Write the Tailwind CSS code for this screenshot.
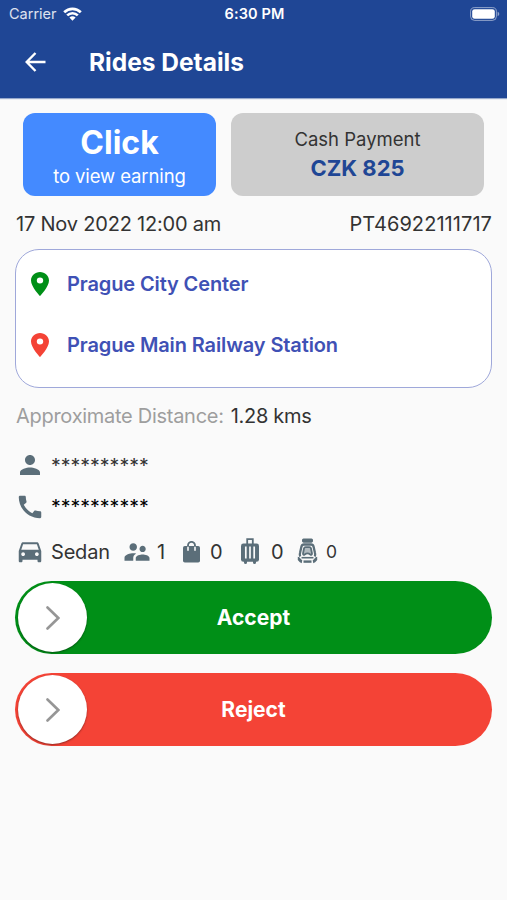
<!DOCTYPE html>
<html lang="en">
<head>
    <meta charset="UTF-8">
    <meta name="viewport" content="width=device-width, initial-scale=1.0">
    <title>Rides Details</title>
    <script src="https://cdn.jsdelivr.net/npm/@tailwindcss/browser@4"></script>
</head>
<body class="bg-[#fafafa] font-['Inter',sans-serif] text-[#333333]">
    <div class="w-[507px] h-[900px] overflow-hidden">
        <header class="h-[98px] bg-[#1f4695] text-white shadow-[0_1px_1px_rgba(31,70,149,0.45)]">
            <div class="grid grid-cols-3 items-center h-[27px] pl-[9px] pr-[7px]">
                <div class="flex items-center gap-[6px] text-[14.5px] text-white/85">
                    <span class="pt-px">Carrier</span>
                    <svg class="w-[19px] h-[14px]" viewBox="0 0 19 14" fill="none" stroke="white" stroke-width="2.7">
                        <path d="M1.2 5.2a11.8 11.8 0 0 1 16.6 0" />
                        <path d="M4.2 8.4a7.6 7.6 0 0 1 10.6 0" />
                        <path d="M9.5 13.8 6.4 10.6a4.5 4.5 0 0 1 6.2 0z" fill="white" stroke="none" />
                    </svg>
                </div>
                <div class="text-center text-[14.5px] font-semibold tracking-[0.1px]">6:30 PM</div>
                <svg class="w-[30px] h-[14px] justify-self-end" viewBox="0 0 30 14">
                    <rect x=".6" y=".6" width="25.8" height="12.8" rx="4" fill="none" stroke="white" stroke-opacity=".5" />
                    <rect x="2.2" y="2.2" width="22.6" height="9.6" rx="2.4" fill="white" />
                    <path d="M27.6 4.8c2.2.7 2.2 3.7 0 4.4z" fill="white" fill-opacity=".5" />
                </svg>
            </div>
            <div class="flex items-center h-[70px] pl-[25px]">
                <svg class="w-[21px] h-[20px]" viewBox="0 0 21 20" fill="none" stroke="white" stroke-width="2.4">
                    <path d="M20.5 10H2M10.5 1 1.7 10l8.8 9" />
                </svg>
                <h1 class="ml-[43px] pt-px text-[24.5px] font-bold">Rides Details</h1>
            </div>
        </header>
        <main class="px-[15px] pt-[15px]">
            <div class="flex gap-[15px] px-[8px] h-[83px]">
                <button class="w-[193px] rounded-[12px] bg-[#448aff] text-white flex flex-col items-center">
                    <span class="mt-[10px] text-[32px] leading-[40px] font-bold">Click</span>
                    <span class="mt-px text-[18.5px] leading-[24px] tracking-[-0.1px]">to view earning</span>
                </button>
                <div class="w-[253px] rounded-[12px] bg-[#cdcdcd] flex flex-col items-center">
                    <span class="mt-[14px] text-[18.5px] leading-[24px]">Cash Payment</span>
                    <span class="mt-px text-[22px] leading-[32px] font-bold text-[#1f4695]">CZK 825</span>
                </div>
            </div>
            <div class="flex justify-between items-center h-[53px] pl-px pt-[2px] text-[20px]">
                <span class="tracking-[-0.2px]">17 Nov 2022 12:00 am</span>
                <span class="tracking-[0.07px]">PT46922111717</span>
            </div>
            <div class="h-[139px] rounded-[24px] border border-[#9fa8da] bg-white pl-[15px] pt-[14px] text-[20px] font-semibold tracking-[-0.12px] text-[#3f51b5]">
                <div class="flex items-center h-[40px]">
                    <svg class="w-[18px] h-[24px]" viewBox="5 2 14 20" preserveAspectRatio="none" fill="#008f17"><path d="M12 2C8.13 2 5 5.13 5 9c0 5.25 7 13 7 13s7-7.75 7-13c0-3.87-3.13-7-7-7zm0 9.5a2.5 2.5 0 0 1 0-5 2.5 2.5 0 0 1 0 5z" /></svg>
                    <span class="ml-[18px]">Prague City Center</span>
                </div>
                <div class="flex items-center h-[40px] mt-[21px]">
                    <svg class="w-[18px] h-[24px]" viewBox="5 2 14 20" preserveAspectRatio="none" fill="#f44336"><path d="M12 2C8.13 2 5 5.13 5 9c0 5.25 7 13 7 13s7-7.75 7-13c0-3.87-3.13-7-7-7zm0 9.5a2.5 2.5 0 0 1 0-5 2.5 2.5 0 0 1 0 5z" /></svg>
                    <span class="ml-[18px]">Prague Main Railway Station</span>
                </div>
            </div>
            <div class="flex items-center h-[54px] pl-px pt-px text-[20px] tracking-[-0.28px]">
                <span class="text-[#9e9e9e]">Approximate Distance:</span>
                <span class="ml-[7px]">1.28 kms</span>
            </div>
            <div class="flex items-center h-[46px]">
                <svg class="w-[30px] h-[30px]" viewBox="0 0 24 24" fill="#5b6e79"><path d="M12 12c2.21 0 4-1.79 4-4s-1.79-4-4-4-4 1.79-4 4 1.79 4 4 4zm0 2c-2.67 0-8 1.34-8 4v2h16v-2c0-2.66-5.33-4-8-4z" /></svg>
                <span class="ml-[6px] pt-[4px] text-[19.5px]">**********</span>
            </div>
            <div class="flex items-center h-[37px]">
                <svg class="w-[30px] h-[30px]" viewBox="0 0 24 24" fill="#5b6e79"><path d="M20.01 15.38c-1.23 0-2.42-.2-3.53-.56-.35-.12-.74-.03-1.01.24l-1.57 1.97c-2.83-1.35-5.48-3.9-6.89-6.83l1.95-1.66c.27-.28.35-.67.24-1.02-.37-1.11-.56-2.3-.56-3.53 0-.54-.45-.99-.99-.99H4.19C3.65 3 3 3.24 3 3.99 3 13.28 10.73 21 20.01 21c.71 0 .99-.63.99-1.18v-3.45c0-.54-.45-.99-.99-.99z" /></svg>
                <span class="ml-[6px] pt-[3px] text-[19.5px] text-black">**********</span>
            </div>
            <div class="flex items-center h-[54px] text-[20px]">
                <svg class="w-[30px] h-[30px] mb-[2px]" viewBox="0 0 24 24" fill="#5b6e79"><path d="M18.92 6.01C18.72 5.42 18.16 5 17.5 5h-11c-.66 0-1.21.42-1.42 1.01L3 12v8c0 .55.45 1 1 1h1c.55 0 1-.45 1-1v-1h12v1c0 .55.45 1 1 1h1c.55 0 1-.45 1-1v-8l-2.08-5.99zM6.5 16c-.83 0-1.5-.67-1.5-1.5S5.67 13 6.5 13s1.5.67 1.5 1.5S7.33 16 6.5 16zm11 0c-.83 0-1.5-.67-1.5-1.5s.67-1.5 1.5-1.5 1.5.67 1.5 1.5-.67 1.5-1.5 1.5zM5 11l1.5-4.5h11L19 11H5z" /></svg>
                <span class="ml-[6px] w-[71px] tracking-[-0.2px]">Sedan</span>
                <svg class="w-[30px] h-[30px]" viewBox="0 0 24 24" fill="#5b6e79"><path d="M16.5 12c1.38 0 2.49-1.12 2.49-2.5S17.88 7 16.5 7C15.12 7 14 8.12 14 9.5s1.12 2.5 2.5 2.5zM9 11c1.66 0 2.99-1.34 2.99-3S10.66 5 9 5C7.34 5 6 6.34 6 8s1.34 3 3 3zm7.5 3c-1.83 0-5.5.92-5.5 2.75V19h11v-2.25c0-1.83-3.67-2.75-5.5-2.75zM9 13c-2.33 0-7 1.17-7 3.5V19h7v-2.25c0-.85.33-2.34 2.37-3.47C10.5 13.1 9.66 13 9 13z" /></svg>
                <span class="ml-[5px] w-[26px]">1</span>
                <!-- hand bag -->
                <svg class="w-[17px] h-[22px]" viewBox="0 0 17 22">
                    <path d="M5 8V4.4a3.5 3.5 0 0 1 7 0V8" fill="none" stroke="#5b6e79" stroke-width="1.9" />
                    <rect y="5" width="17" height="16.5" rx="1.8" fill="#5b6e79" />
                    <path d="M5 6.2v3M12 6.2v3" stroke="#fafafa" stroke-width="1.6" stroke-linecap="round" />
                </svg>
                <span class="ml-[10px] w-[31px]">0</span>
                <!-- suitcase -->
                <svg class="w-[18px] h-[26px] mb-[2px]" viewBox="0 0 18 26">
                    <path d="M6.2 6.5V1.2h5.6v5.3" fill="none" stroke="#5b6e79" stroke-width="1.8" />
                    <rect y="5.6" width="18" height="18.2" rx="2.4" fill="#5b6e79" />
                    <path d="M3 23h3v1.5a1.5 1.5 0 0 1-3 0zM12 23h3v1.5a1.5 1.5 0 0 1-3 0z" fill="#5b6e79" />
                    <path d="M4.8 8.5v12M9 8.5v12M13.2 8.5v12" stroke="#fafafa" stroke-width="1.7" />
                </svg>
                <span class="ml-[12px] w-[26px]">0</span>
                <!-- child seat -->
                <svg class="w-[21px] h-[26px] mb-[2px]" viewBox="0 0 21 26" fill="none" stroke="#5b6e79" stroke-linejoin="round">
                    <rect x="5.5" y="1" width="10" height="3.2" rx=".8" fill="#5b6e79" stroke-width="1" />
                    <path d="M3.4 18.5c-.9-1-.8-2-.4-3.5l1.4-6.2C4.8 7 5.600 6.500 7 6.500h7c1.400 0 2.200.5 2.600 2.300L18 15c.4 1.500.5 2.500-.4 3.500" stroke-width="2.300" />
                    <path d="M7 10.500c.2-.9.600-1.300 1.500-1.300h4c.9 0 1.300.4 1.500 1.300l1 5c.2 1.200-.8 1.700-1.700 1-1.700-1.300-3.900-1.300-5.600 0-.9.700-1.900.2-1.700-1z" fill="#5b6e79" fill-opacity=".45" stroke-width="1.800" />
                    <path d="M4.500 19.700h12" stroke-width="1.600" />
                    <path d="M.8 20.200c1.500 0 1.800 3 4.200 3.500M20.200 20.200c-1.500 0-1.800 3-4.200 3.500" stroke-width="3" />
                    <path d="M6.500 23.600h8" stroke-width="2.400" />
                </svg>
                <span class="ml-[8px] text-[17.5px]">0</span>
            </div>
            <button class="relative flex items-center justify-center w-full mt-[2px] h-[73px] rounded-full bg-[#008f17] text-white text-[21px] font-bold">
                <span class="absolute left-[3px] top-[2px] w-[69px] h-[69px] rounded-full bg-white flex items-center justify-center shadow-[0_1px_2px_rgba(0,0,0,0.4)]">
                    <svg class="w-[14px] h-[24px]" viewBox="0 0 14 24" fill="none" stroke="#969696" stroke-width="2.6" stroke-linecap="round"><path d="M1.5 1.5 12.3 12 1.5 22.5" /></svg>
                </span>
                Accept
            </button>
            <button class="relative flex items-center justify-center w-full mt-[19px] h-[73px] rounded-full bg-[#f44336] text-white text-[21px] font-bold">
                <span class="absolute left-[3px] top-[2px] w-[69px] h-[69px] rounded-full bg-white flex items-center justify-center shadow-[0_1px_2px_rgba(0,0,0,0.4)]">
                    <svg class="w-[14px] h-[24px]" viewBox="0 0 14 24" fill="none" stroke="#969696" stroke-width="2.6" stroke-linecap="round"><path d="M1.5 1.5 12.3 12 1.5 22.5" /></svg>
                </span>
                Reject
            </button>
        </main>
    </div>
</body>
</html>
